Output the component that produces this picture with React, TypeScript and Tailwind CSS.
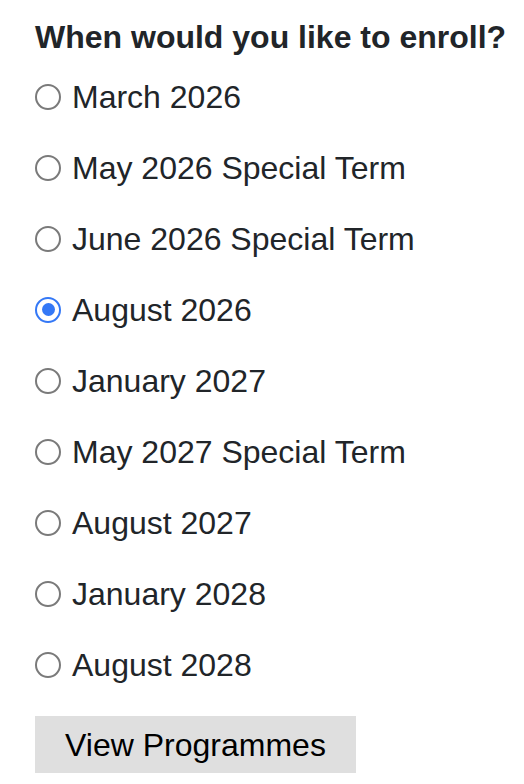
const terms = [
  "March 2026",
  "May 2026 Special Term",
  "June 2026 Special Term",
  "August 2026",
  "January 2027",
  "May 2027 Special Term",
  "August 2027",
  "January 2028",
  "August 2028",
];

function Radio({ checked }: { checked: boolean }) {
  if (checked) {
    return (
      <span className="flex h-[26px] w-[26px] shrink-0 items-center justify-center rounded-full border-2 border-[#3478f6] bg-white">
        <span className="h-[13px] w-[13px] rounded-full bg-[#3478f6]" />
      </span>
    );
  }
  return <span className="h-[26px] w-[26px] shrink-0 rounded-full border-2 border-[#7a7a7a] bg-white" />;
}

export default function App() {
  const selected = "August 2026";
  return (
    <div className="min-h-[784px] bg-white pl-[35px] pt-[19px] font-['Liberation_Sans',Arial,sans-serif] text-[#212529]">
      <h2 className="whitespace-nowrap text-[32px] font-bold leading-[36px]">When would you like to enroll?</h2>
      <div className="mt-[6px] flex flex-col">
        {terms.map((t) => (
          <label key={t} className="flex h-[71px] items-center gap-[11px] whitespace-nowrap text-[32px] leading-[36px]">
            <Radio checked={t === selected} />
            <span>{t}</span>
          </label>
        ))}
      </div>
      <button className="mt-[16px] h-[57px] w-[321px] bg-[#dfdfdf] text-[32px] leading-[36px] text-black">
        View Programmes
      </button>
    </div>
  );
}
